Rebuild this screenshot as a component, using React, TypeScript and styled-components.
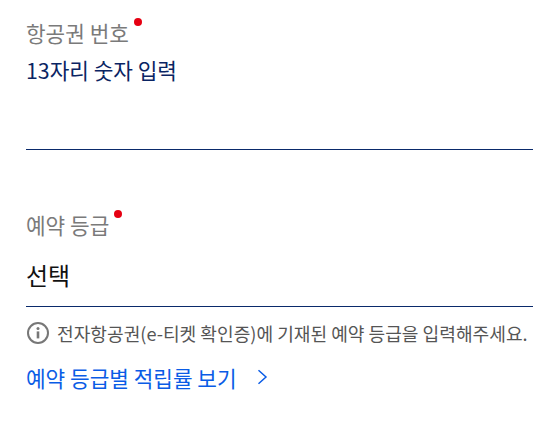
import React from "react";
import styled, { createGlobalStyle } from "styled-components";

const GlobalStyle = createGlobalStyle`
    html, body {
        margin: 0;
        padding: 0;
        background: #ffffff;
    }
    body {
        font-family: "Noto Sans CJK KR", "Noto Sans", sans-serif;
    }
`;

const Page = styled.div`
    box-sizing: border-box;
    width: 533px;
    height: 431px;
    padding: 16px 0 0 26px;
    overflow: hidden;
`;

const Field = styled.div<{ $height: number }>`
    box-sizing: border-box;
    height: ${(props) => props.$height}px;
    border-bottom: 1px solid #0a2a6b;
`;

const Label = styled.div`
    display: flex;
    align-items: flex-start;
    height: 36px;
    font-size: 21.33px;
    line-height: 34px;
    color: #7a7a7a;
`;

const RequiredDot = styled.span`
    width: 8px;
    height: 8px;
    margin: 2px 0 0 5px;
    border-radius: 50%;
    background: #e60012;
`;

const Placeholder = styled.div`
    font-size: 21.33px;
    line-height: 36px;
    color: #0a2463;
`;

const SelectValue = styled.div`
    margin-top: 9px;
    font-size: 24px;
    line-height: 44px;
    color: #111111;
`;

const SecondField = styled.div`
    margin-top: 58px;
`;

const Notice = styled.div`
    display: flex;
    align-items: center;
    gap: 7px;
    height: 26px;
    margin-top: 13px;
    font-size: 18.13px;
    color: #555555;
    white-space: nowrap;
`;

const MoreLink = styled.a`
    display: flex;
    align-items: center;
    gap: 20px;
    margin-top: 16px;
    height: 30px;
    font-size: 21.33px;
    color: #0a5ce6;
    text-decoration: none;
    white-space: nowrap;
`;

const InfoIcon = () => (
    <svg width="24" height="24" viewBox="0 0 24 24" fill="none">
        <circle cx="12" cy="12" r="10" stroke="#777777" strokeWidth="2" />
        <circle cx="12" cy="7.6" r="1.5" fill="#777777" />
        <rect x="10.7" y="10.4" width="2.6" height="7" fill="#777777" />
    </svg>
);

const ChevronIcon = () => (
    <svg width="11" height="16" viewBox="0 0 11 16" fill="none">
        <path d="M1.5 1.2 L9 8 L1.5 14.8" stroke="#0a5ce6" strokeWidth="1.5" />
    </svg>
);

export default function App() {
    return (
        <>
            <GlobalStyle />
            <Page>
                <Field $height={134}>
                    <Label>
                        항공권 번호
                        <RequiredDot />
                    </Label>
                    <Placeholder>13자리 숫자 입력</Placeholder>
                </Field>
                <SecondField>
                    <Field $height={99}>
                        <Label>
                            예약 등급
                            <RequiredDot />
                        </Label>
                        <SelectValue>선택</SelectValue>
                    </Field>
                </SecondField>
                <Notice>
                    <InfoIcon />
                    전자항공권(e-티켓 확인증)에 기재된 예약 등급을 입력해주세요.
                </Notice>
                <MoreLink href="#">
                    예약 등급별 적립률 보기
                    <ChevronIcon />
                </MoreLink>
            </Page>
        </>
    );
}
